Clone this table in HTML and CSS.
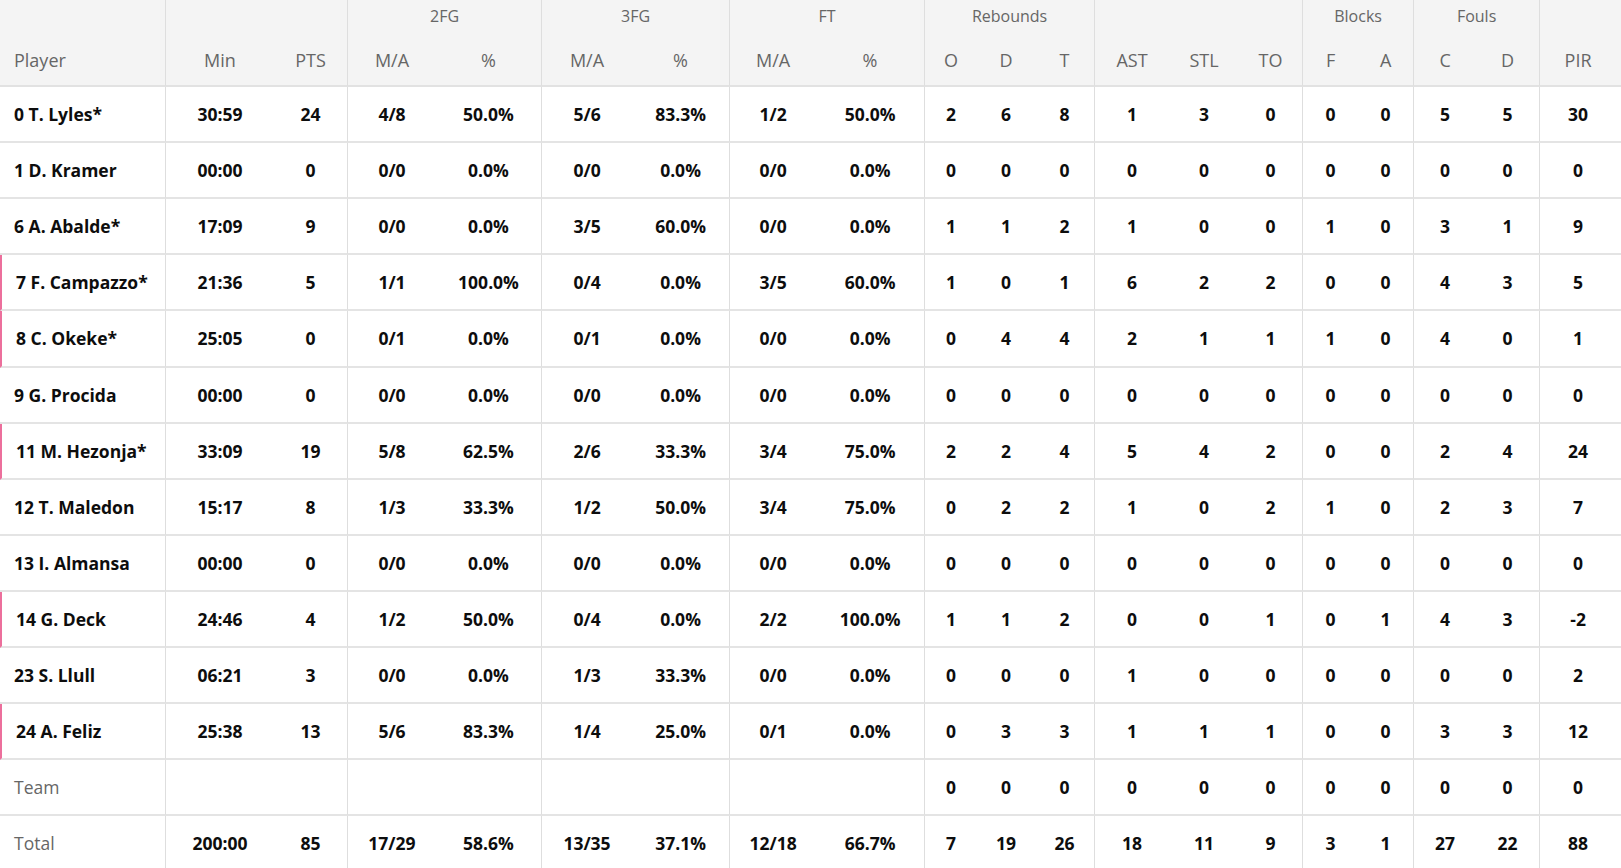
FILE: index.html
```html
<!DOCTYPE html>
<html lang="en">
<head>
<meta charset="utf-8">
<title>Box score</title>
<link rel="stylesheet" href="styles.css">
</head>
<body>
<table class="box">
  <colgroup>
    <col class="c-player"><col class="c-min"><col class="c-pts">
    <col class="c-2ma"><col class="c-2p"><col class="c-3ma"><col class="c-3p">
    <col class="c-ftma"><col class="c-ftp">
    <col class="c-o"><col class="c-d"><col class="c-t">
    <col class="c-ast"><col class="c-stl"><col class="c-to">
    <col class="c-bf"><col class="c-ba"><col class="c-fc"><col class="c-fd">
    <col class="c-pir">
  </colgroup>
  <thead>
    <tr class="groups">
      <th class="end"></th>
      <th colspan="2" class="end"></th>
      <th colspan="2" class="end">2FG</th>
      <th colspan="2" class="end">3FG</th>
      <th colspan="2" class="end">FT</th>
      <th colspan="3" class="end">Rebounds</th>
      <th colspan="3" class="end"></th>
      <th colspan="2" class="end">Blocks</th>
      <th colspan="2" class="end">Fouls</th>
      <th></th>
    </tr>
    <tr class="labels">
      <th class="name end">Player</th>
      <th>Min</th><th class="end">PTS</th>
      <th>M/A</th><th class="end">%</th>
      <th>M/A</th><th class="end">%</th>
      <th>M/A</th><th class="end">%</th>
      <th>O</th><th>D</th><th class="end">T</th>
      <th>AST</th><th>STL</th><th class="end">TO</th>
      <th>F</th><th class="end">A</th>
      <th>C</th><th class="end">D</th>
      <th class="pir">PIR</th>
    </tr>
  </thead>
  <tbody>
    <tr><td class="name end">0 T. Lyles*</td><td>30:59</td><td class="end">24</td><td>4/8</td><td class="end">50.0%</td><td>5/6</td><td class="end">83.3%</td><td>1/2</td><td class="end">50.0%</td><td>2</td><td>6</td><td class="end">8</td><td>1</td><td>3</td><td class="end">0</td><td>0</td><td class="end">0</td><td>5</td><td class="end">5</td><td class="pir">30</td></tr>
    <tr><td class="name end">1 D. Kramer</td><td>00:00</td><td class="end">0</td><td>0/0</td><td class="end">0.0%</td><td>0/0</td><td class="end">0.0%</td><td>0/0</td><td class="end">0.0%</td><td>0</td><td>0</td><td class="end">0</td><td>0</td><td>0</td><td class="end">0</td><td>0</td><td class="end">0</td><td>0</td><td class="end">0</td><td class="pir">0</td></tr>
    <tr><td class="name end">6 A. Abalde*</td><td>17:09</td><td class="end">9</td><td>0/0</td><td class="end">0.0%</td><td>3/5</td><td class="end">60.0%</td><td>0/0</td><td class="end">0.0%</td><td>1</td><td>1</td><td class="end">2</td><td>1</td><td>0</td><td class="end">0</td><td>1</td><td class="end">0</td><td>3</td><td class="end">1</td><td class="pir">9</td></tr>
    <tr class="marked"><td class="name end">7 F. Campazzo*</td><td>21:36</td><td class="end">5</td><td>1/1</td><td class="end">100.0%</td><td>0/4</td><td class="end">0.0%</td><td>3/5</td><td class="end">60.0%</td><td>1</td><td>0</td><td class="end">1</td><td>6</td><td>2</td><td class="end">2</td><td>0</td><td class="end">0</td><td>4</td><td class="end">3</td><td class="pir">5</td></tr>
    <tr class="marked"><td class="name end">8 C. Okeke*</td><td>25:05</td><td class="end">0</td><td>0/1</td><td class="end">0.0%</td><td>0/1</td><td class="end">0.0%</td><td>0/0</td><td class="end">0.0%</td><td>0</td><td>4</td><td class="end">4</td><td>2</td><td>1</td><td class="end">1</td><td>1</td><td class="end">0</td><td>4</td><td class="end">0</td><td class="pir">1</td></tr>
    <tr><td class="name end">9 G. Procida</td><td>00:00</td><td class="end">0</td><td>0/0</td><td class="end">0.0%</td><td>0/0</td><td class="end">0.0%</td><td>0/0</td><td class="end">0.0%</td><td>0</td><td>0</td><td class="end">0</td><td>0</td><td>0</td><td class="end">0</td><td>0</td><td class="end">0</td><td>0</td><td class="end">0</td><td class="pir">0</td></tr>
    <tr class="marked"><td class="name end">11 M. Hezonja*</td><td>33:09</td><td class="end">19</td><td>5/8</td><td class="end">62.5%</td><td>2/6</td><td class="end">33.3%</td><td>3/4</td><td class="end">75.0%</td><td>2</td><td>2</td><td class="end">4</td><td>5</td><td>4</td><td class="end">2</td><td>0</td><td class="end">0</td><td>2</td><td class="end">4</td><td class="pir">24</td></tr>
    <tr><td class="name end">12 T. Maledon</td><td>15:17</td><td class="end">8</td><td>1/3</td><td class="end">33.3%</td><td>1/2</td><td class="end">50.0%</td><td>3/4</td><td class="end">75.0%</td><td>0</td><td>2</td><td class="end">2</td><td>1</td><td>0</td><td class="end">2</td><td>1</td><td class="end">0</td><td>2</td><td class="end">3</td><td class="pir">7</td></tr>
    <tr><td class="name end">13 I. Almansa</td><td>00:00</td><td class="end">0</td><td>0/0</td><td class="end">0.0%</td><td>0/0</td><td class="end">0.0%</td><td>0/0</td><td class="end">0.0%</td><td>0</td><td>0</td><td class="end">0</td><td>0</td><td>0</td><td class="end">0</td><td>0</td><td class="end">0</td><td>0</td><td class="end">0</td><td class="pir">0</td></tr>
    <tr class="marked"><td class="name end">14 G. Deck</td><td>24:46</td><td class="end">4</td><td>1/2</td><td class="end">50.0%</td><td>0/4</td><td class="end">0.0%</td><td>2/2</td><td class="end">100.0%</td><td>1</td><td>1</td><td class="end">2</td><td>0</td><td>0</td><td class="end">1</td><td>0</td><td class="end">1</td><td>4</td><td class="end">3</td><td class="pir">-2</td></tr>
    <tr><td class="name end">23 S. Llull</td><td>06:21</td><td class="end">3</td><td>0/0</td><td class="end">0.0%</td><td>1/3</td><td class="end">33.3%</td><td>0/0</td><td class="end">0.0%</td><td>0</td><td>0</td><td class="end">0</td><td>1</td><td>0</td><td class="end">0</td><td>0</td><td class="end">0</td><td>0</td><td class="end">0</td><td class="pir">2</td></tr>
    <tr class="marked"><td class="name end">24 A. Feliz</td><td>25:38</td><td class="end">13</td><td>5/6</td><td class="end">83.3%</td><td>1/4</td><td class="end">25.0%</td><td>0/1</td><td class="end">0.0%</td><td>0</td><td>3</td><td class="end">3</td><td>1</td><td>1</td><td class="end">1</td><td>0</td><td class="end">0</td><td>3</td><td class="end">3</td><td class="pir">12</td></tr>
    <tr class="summary"><td class="name end">Team</td><td></td><td class="end"></td><td></td><td class="end"></td><td></td><td class="end"></td><td></td><td class="end"></td><td>0</td><td>0</td><td class="end">0</td><td>0</td><td>0</td><td class="end">0</td><td>0</td><td class="end">0</td><td>0</td><td class="end">0</td><td class="pir">0</td></tr>
    <tr class="summary"><td class="name end">Total</td><td>200:00</td><td class="end">85</td><td>17/29</td><td class="end">58.6%</td><td>13/35</td><td class="end">37.1%</td><td>12/18</td><td class="end">66.7%</td><td>7</td><td>19</td><td class="end">26</td><td>18</td><td>11</td><td class="end">9</td><td>3</td><td class="end">1</td><td>27</td><td class="end">22</td><td class="pir">88</td></tr>
  </tbody>
</table>
</body>
</html>
```
FILE: styles.css
```css
* { box-sizing: border-box; }
html, body { margin: 0; padding: 0; background: #fff; }
body {
  font-family: "Open Sans", Lato, sans-serif;
  color: #111;
  overflow: hidden;
}
.box {
  width: 1621px;
  table-layout: fixed;
  border-collapse: separate;
  border-spacing: 0;
}
.c-player { width: 166px; }
.c-min { width: 108px; }
.c-pts { width: 74px; }
.c-2ma { width: 88px; }
.c-2p { width: 106px; }
.c-3ma { width: 90px; }
.c-3p { width: 98px; }
.c-ftma { width: 86px; }
.c-ftp { width: 109px; }
.c-o { width: 52px; }
.c-d { width: 58px; }
.c-t { width: 60px; }
.c-ast { width: 74px; }
.c-stl { width: 70px; }
.c-to { width: 64px; }
.c-bf { width: 55px; }
.c-ba { width: 56px; }
.c-fc { width: 62px; }
.c-fd { width: 64px; }
.c-pir { width: 81px; }

th, td {
  padding: 0;
  text-align: center;
  vertical-align: middle;
  white-space: nowrap;
}
.end { border-right: 1px solid #dedede; }
.pir { padding-right: 5px; }

thead th {
  background: #f4f4f4;
  color: #666;
  font-weight: 400;
}
.groups th {
  height: 34px;
  font-size: 16px;
  padding-bottom: 2px;
}
.labels th {
  height: 53px;
  font-size: 18px;
  border-bottom: 2px solid #e2e2e2;
}
tbody td {
  height: 56px;
  font-size: 17.5px;
  font-weight: 700;
  color: #0d0d0d;
  border-bottom: 2px solid #e4e4e4;
}
tbody tr:nth-child(odd) td { height: 56.2px; }
th.name, td.name {
  text-align: left;
  padding-left: 14px;
}
tr.marked td.name {
  border-left: 2px solid #ec6f9c;
  padding-left: 14px;
}
tr.summary td.name {
  font-weight: 400;
  color: #666;
}
```
